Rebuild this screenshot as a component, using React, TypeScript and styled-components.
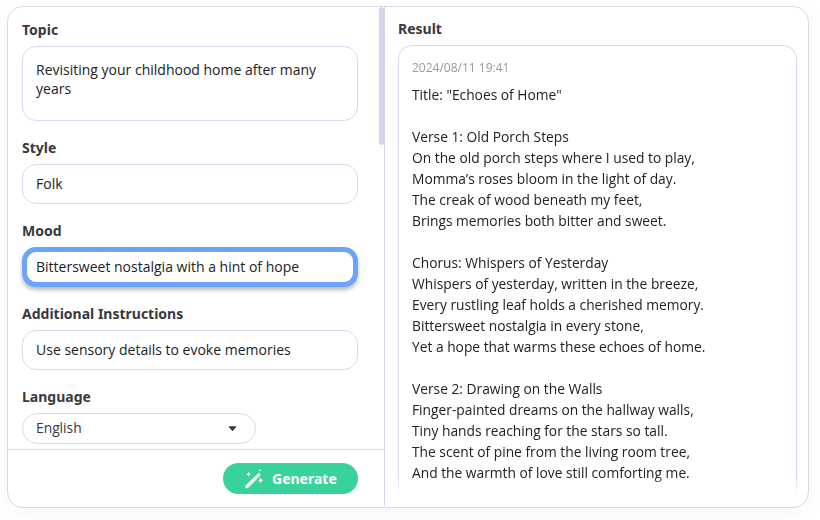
import React from "react";
import styled, { createGlobalStyle, css } from "styled-components";

const GlobalStyle = createGlobalStyle`
  *, *::before, *::after { box-sizing: border-box; }
  body {
    margin: 0;
    background: #fff;
    font-family: "Open Sans", "Noto Sans", sans-serif;
    font-size: 14px;
    color: #222;
  }
`;

const Page = styled.main`
  height: 520px;
  padding: 6px 11px 12px 7px;
  overflow: hidden;
`;

const Card = styled.section`
  display: grid;
  grid-template-columns: 377px 1fr;
  width: 802px;
  height: 502px;
  border: 1px solid #d9dbe0;
  border-radius: 16px;
  background: #fff;
  box-shadow: 0 4px 16px rgba(80, 130, 190, 0.07);
  overflow: hidden;
`;

const FormColumn = styled.div`
  display: flex;
  flex-direction: column;
  height: 499px;
  border-right: 1px solid #d5d5eb;
`;

const FormScroll = styled.div`
  display: flex;
  height: 442px;
  flex: none;
  justify-content: space-between;
  overflow: hidden;
`;

const Fields = styled.form`
  width: 350px;
  padding: 13px 0 0 14px;
`;

const ScrollThumb = styled.div`
  width: 5px;
  height: 138px;
  border-radius: 3px;
  background: #d1d4ea;
`;

const Field = styled.div<{ $gap?: number }>`
  margin-bottom: ${({ $gap = 17 }) => $gap}px;
`;

const Label = styled.label`
  display: block;
  height: 20px;
  margin-bottom: 6px;
  line-height: 20px;
  font-family: "Noto Sans", sans-serif;
  font-size: 14px;
  font-weight: 700;
  color: #38393d;
`;

const control = css`
  display: block;
  width: 336px;
  border: 1px solid #d9d8ee;
  border-radius: 14px;
  background: #fff;
  font: inherit;
  color: #222;
  outline: none;
`;

const TextArea = styled.textarea`
  ${control}
  height: 75px;
  padding: 13px 13px;
  line-height: 19px;
  resize: none;
  overflow: hidden;
`;

const Input = styled.input<{ $focused?: boolean }>`
  ${control}
  height: 40px;
  padding: 0 13px 1px;
  ${({ $focused }) =>
    $focused &&
    css`
      padding: 0 9px 1px;
      border: 5px solid #6aa5fb;
      box-shadow: 0 3px 4px rgba(0, 0, 0, 0.28);
    `}
`;

const Select = styled.div`
  display: flex;
  align-items: center;
  justify-content: space-between;
  width: 234px;
  height: 31px;
  padding: 0 18px 2px 13px;
  border: 1px solid #d9d8ee;
  border-radius: 16px;
  font-size: 13.8px;
  color: #38393d;

  svg {
    margin-top: 2px;
  }
`;

const Footer = styled.footer`
  display: flex;
  flex: 1;
  align-items: flex-start;
  justify-content: flex-end;
  padding: 13px 26px 0 0;
  border-top: 1px solid #d5d5eb;
`;

const GenerateButton = styled.button`
  display: flex;
  align-items: center;
  gap: 7px;
  width: 135px;
  height: 31px;
  padding: 0 0 0 21px;
  border: 0;
  border-radius: 16px;
  background: #37d39b;
  color: #fff;
  font-family: "Noto Sans", sans-serif;
  font-size: 14px;
  font-weight: 700;
`;

const ResultColumn = styled.div`
  padding: 12px 11px 14px 13px;
`;

const ResultTitle = styled.h2`
  height: 20px;
  margin: 0 0 6px;
  line-height: 20px;
  font-family: "Noto Sans", sans-serif;
  font-size: 14px;
  font-weight: 700;
  color: #38393d;
`;

const ResultPanel = styled.article`
  height: 450px;
  padding: 12px 13px 0;
  border: 1px solid #d9d8ee;
  border-bottom: 0;
  border-radius: 14px 14px 0 0;
  mask-image: linear-gradient(to bottom, #000 432px, transparent 449px);
`;

const Timestamp = styled.time`
  display: block;
  height: 20px;
  line-height: 20px;
  font-size: 12px;
  color: #999;
`;

const Lyrics = styled.div`
  margin-top: 5px;
  font-size: 13.79px;
  line-height: 21px;
  white-space: pre;
  transform: translateY(0.5px);
`;

const Wand = () => (
  <svg width="21" height="20" viewBox="0 0 21 20" fill="#fff">
    <path d="M3 17.5 11.9 8.7" stroke="#fff" strokeWidth="3.3" strokeLinecap="round" />
    <path d="m14 6.6.8-.8" stroke="#fff" strokeWidth="3.3" strokeLinecap="round" />
    <path d="m4.6 2.8.8 1.7 1.7.8-1.7.8-.8 1.7-.8-1.7-1.7-.8 1.7-.8z" />
    <ellipse cx="15.9" cy="1.4" rx="1.1" ry=".8" />
    <path d="m16.6 8.6.9 1.8 1.8.9-1.8.9-.9 1.8-.9-1.8-1.8-.9 1.8-.9z" />
  </svg>
);

const Caret = () => (
  <svg width="9" height="6" viewBox="0 0 9 6">
    <path d="M1.2.8h6.6L4.5 4.7z" fill="#38393d" stroke="#38393d" strokeLinejoin="round" />
  </svg>
);

const lyrics = `Title: "Echoes of Home"

Verse 1: Old Porch Steps
On the old porch steps where I used to play,
Momma’s roses bloom in the light of day.
The creak of wood beneath my feet,
Brings memories both bitter and sweet.

Chorus: Whispers of Yesterday
Whispers of yesterday, written in the breeze,
Every rustling leaf holds a cherished memory.
Bittersweet nostalgia in every stone,
Yet a hope that warms these echoes of home.

Verse 2: Drawing on the Walls
Finger-painted dreams on the hallway walls,
Tiny hands reaching for the stars so tall.
The scent of pine from the living room tree,
And the warmth of love still comforting me.`;

export default function App() {
  return (
    <>
      <GlobalStyle />
      <Page>
        <Card>
          <FormColumn>
            <FormScroll>
              <Fields>
                <Field>
                  <Label>Topic</Label>
                  <TextArea readOnly value="Revisiting your childhood home after many years" />
                </Field>
                <Field>
                  <Label>Style</Label>
                  <Input readOnly value="Folk" />
                </Field>
                <Field>
                  <Label>Mood</Label>
                  <Input $focused readOnly value="Bittersweet nostalgia with a hint of hope" />
                </Field>
                <Field>
                  <Label>Additional Instructions</Label>
                  <Input readOnly value="Use sensory details to evoke memories" />
                </Field>
                <Field $gap={0}>
                  <Label>Language</Label>
                  <Select>
                    English
                    <Caret />
                  </Select>
                </Field>
              </Fields>
              <ScrollThumb />
            </FormScroll>
            <Footer>
              <GenerateButton type="button">
                <Wand />
                Generate
              </GenerateButton>
            </Footer>
          </FormColumn>
          <ResultColumn>
            <ResultTitle>Result</ResultTitle>
            <ResultPanel>
              <Timestamp>2024/08/11 19:41</Timestamp>
              <Lyrics>{lyrics}</Lyrics>
            </ResultPanel>
          </ResultColumn>
        </Card>
      </Page>
    </>
  );
}
